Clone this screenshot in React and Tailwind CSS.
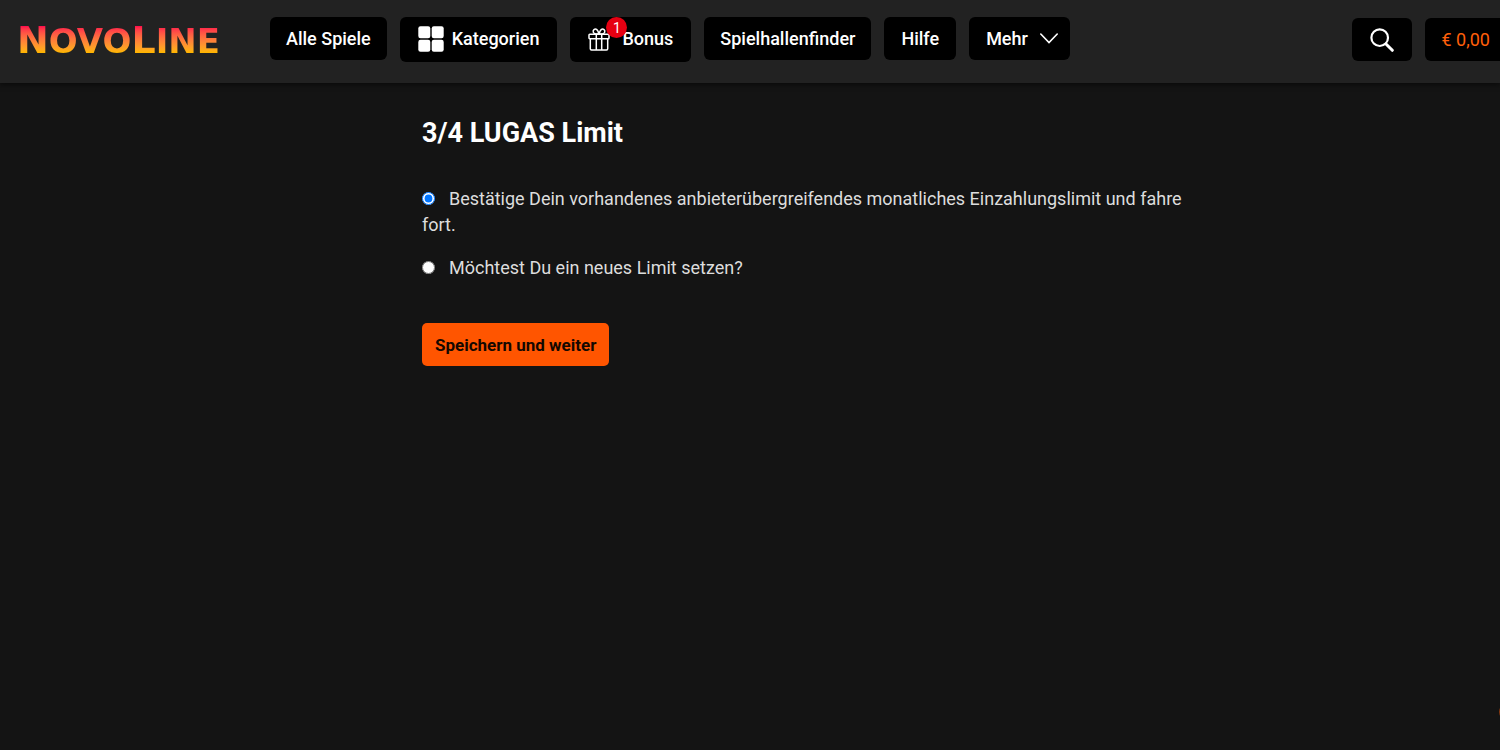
import { useState } from 'react';

const navButton =
  'relative flex shrink-0 items-center rounded-md bg-black text-lg font-medium text-white hover:bg-[#111]';

function Logo() {
  return (
    <a
      href="/"
      aria-label="Novoline"
      className="block w-[237px] shrink-0 bg-linear-to-b from-[#ff0f4b] from-20% to-[#ffb400] to-75% bg-clip-text font-['DejaVu_Sans',sans-serif] text-[34px] leading-[46px] font-bold text-transparent"
    >
      <span className="text-[38px]">N</span>OVO<span className="text-[38px]">L</span>INE
    </a>
  );
}

function GridIcon() {
  return (
    <svg width="26" height="26" viewBox="0 0 26 26" fill="#fff" aria-hidden="true">
      <rect x="0.3" y="0.3" width="12" height="12" rx="2.2" />
      <rect x="13.7" y="0.3" width="12" height="12" rx="2.2" />
      <rect x="0.3" y="13.7" width="12" height="12" rx="2.2" />
      <rect x="13.7" y="13.7" width="12" height="12" rx="2.2" />
    </svg>
  );
}

function GiftIcon() {
  return (
    <svg width="22" height="24" viewBox="0 0 22 24" fill="none" stroke="#fff" strokeWidth="1.5" strokeLinejoin="round" aria-hidden="true">
      <rect x="1" y="7.2" width="20" height="4.6" rx="0.8" />
      <path d="M2.3 11.8V21.800a1.200 1.200 0 0 0 1.200 1.200h15a1.200 1.200 0 0 0 1.200-1.200V11.800" />
      <path d="M8.300 7.200v15.800M13.700 7.200v15.800" />
      <path d="M10.800 7H8C5 6.800 4.500 4 6 2.600c1.800-1.500 4.200.1 4.800 4.400Z" />
      <path d="M11.200 7H14c3-.2 3.500-3 2-4.400-1.800-1.500-4.200.1-4.800 4.400Z" />
    </svg>
  );
}

function Header() {
  return (
    <header className="flex h-[83px] items-start overflow-hidden bg-[#222] pt-[17px] pl-[17px] shadow-[0_2px_5px_rgba(0,0,0,0.5)]">
      <Logo />
      <nav className="ml-4 flex shrink-0 items-start gap-[13px]">
        <button type="button" className={`${navButton} h-[43px] px-4`}>Alle Spiele</button>
        <button type="button" className={`${navButton} h-[45px] gap-2 px-[18px] pb-0.5`}>
          <GridIcon />
          Kategorien
        </button>
        <button type="button" className={`${navButton} h-[45px] gap-3 px-[18px] pb-0.5`}>
          <GiftIcon />
          Bonus
          <span className="absolute top-0 left-9 flex size-[21px] items-center justify-center rounded-full bg-[#e60012] text-sm font-normal">
            1
          </span>
        </button>
        <button type="button" className={`${navButton} h-[43px] px-4`}>Spielhallenfinder</button>
        <button type="button" className={`${navButton} h-[43px] px-[17px]`}>Hilfe</button>
        <button type="button" className={`${navButton} h-[43px] gap-3 pr-3 pl-[17px]`}>
          Mehr
          <svg width="18" height="11" viewBox="0 0 18 11" fill="none" stroke="#fff" strokeWidth="1.6" strokeLinecap="round" aria-hidden="true">
            <path d="M.8 1 9 9.600 17.200 1" />
          </svg>
        </button>
      </nav>
      <div className="mt-px ml-auto flex shrink-0 gap-[13px]">
        <button
          type="button"
          aria-label="Suche"
          className="flex h-[43px] w-[60px] items-center justify-center rounded-md bg-black"
        >
          <svg width="24" height="24" viewBox="0 0 24 24" fill="none" stroke="#fff" strokeLinecap="round" aria-hidden="true">
            <circle cx="9.700" cy="9.700" r="8.300" strokeWidth="2.200" />
            <path d="m16 16 6.300 6.300" strokeWidth="3" />
          </svg>
        </button>
        <button type="button" className="h-[43px] rounded-l-md bg-black pr-2.5 pl-[17px] text-lg text-[#ff5f0a]">
          € 0,00
        </button>
      </div>
    </header>
  );
}

export default function App() {
  const [choice, setChoice] = useState('confirm');

  return (
    <div className="min-h-screen overflow-hidden bg-[#141414] font-[Roboto,sans-serif]">
      <Header />
      <main className="ml-[422px] max-w-[770px] pt-8">
        <h1 className="text-[27px] leading-9 font-bold text-white">3/4 LUGAS Limit</h1>

        <form onSubmit={(e) => e.preventDefault()} className="mt-[35px] text-lg leading-[26px] text-[#ddd]">
          <div>
            <input
              id="confirm"
              type="radio"
              name="limit"
              checked={choice === 'confirm'}
              onChange={() => setChoice('confirm')}
              className="mr-3.5"
            />
            <label htmlFor="confirm">
              Bestätige Dein vorhandenes anbieterübergreifendes monatliches Einzahlungslimit und fahre fort.
            </label>
          </div>
          <div className="mt-[17px]">
            <input
              id="new-limit"
              type="radio"
              name="limit"
              checked={choice === 'new'}
              onChange={() => setChoice('new')}
              className="mr-3.5"
            />
            <label htmlFor="new-limit">Möchtest Du ein neues Limit setzen?</label>
          </div>
          <button
            type="submit"
            className="mt-[42px] h-[43px] rounded-[5px] bg-[#ff5500] px-[13px] text-[17px] font-bold text-[#140800]"
          >
            Speichern und weiter
          </button>
        </form>
      </main>

      {/* Chat bubble, tucked behind the window edge */}
      <button
        type="button"
        aria-label="Chat"
        className="fixed -right-[15px] bottom-[30px] size-4 rounded-full bg-[#8a3a10]"
      />
    </div>
  );
}
